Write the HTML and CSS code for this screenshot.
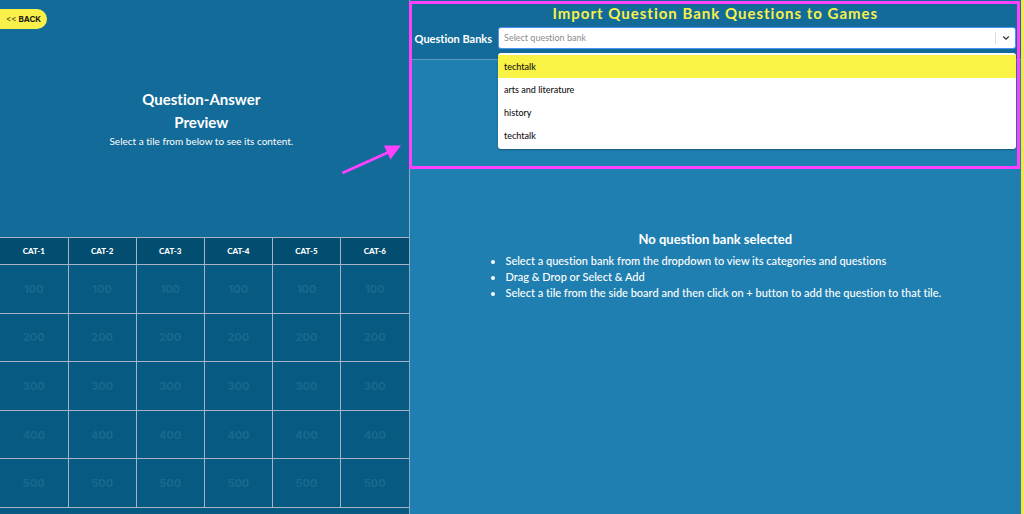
FILE: index.html
```html
<!DOCTYPE html>
<html lang="en">
<head>
<meta charset="utf-8">
<meta name="viewport" content="width=device-width, initial-scale=1">
<title>Import Question Bank Questions to Games</title>
<link rel="stylesheet" href="styles.css">
</head>
<body class="page">
<aside class="side">
  <section class="preview">
    <button class="back" type="button"><span class="back-mark">&lt;&lt;</span> BACK</button>
    <h2 class="preview-title">Question-Answer<br>Preview</h2>
    <p class="preview-text">Select a tile from below to see its content.</p>
  </section>
  <div class="board-wrap">
    <table class="board">
      <thead>
        <tr><th>CAT-1</th><th>CAT-2</th><th>CAT-3</th><th>CAT-4</th><th>CAT-5</th><th>CAT-6</th></tr>
      </thead>
      <tbody>
        <tr><td>100</td><td>100</td><td>100</td><td>100</td><td>100</td><td>100</td></tr>
        <tr><td>200</td><td>200</td><td>200</td><td>200</td><td>200</td><td>200</td></tr>
        <tr><td>300</td><td>300</td><td>300</td><td>300</td><td>300</td><td>300</td></tr>
        <tr><td>400</td><td>400</td><td>400</td><td>400</td><td>400</td><td>400</td></tr>
        <tr><td>500</td><td>500</td><td>500</td><td>500</td><td>500</td><td>500</td></tr>
      </tbody>
    </table>
  </div>
</aside>
<main class="main">
  <header class="header">
    <h1 class="title">Import Question Bank Questions to Games</h1>
    <div class="field">
      <label class="label" for="bank">Question Banks</label>
      <div class="picker">
        <select class="select" id="bank">
          <option value="">Select question bank</option>
          <option>techtalk</option>
          <option>arts and literature</option>
          <option>history</option>
          <option>techtalk</option>
        </select>
        <span class="indicator"><svg width="8" height="6" viewBox="0 0 8 6"><path d="M1.200 1.500 L4 4.200 L6.800 1.500" fill="none" stroke="#333" stroke-width="1.3"/></svg></span>
        <ul class="menu" role="listbox" aria-label="Question Banks">
          <li class="option option-active" role="option" aria-selected="true">techtalk</li>
          <li class="option" role="option" aria-selected="false">arts and literature</li>
          <li class="option" role="option" aria-selected="false">history</li>
          <li class="option" role="option" aria-selected="false">techtalk</li>
        </ul>
      </div>
    </div>
  </header>
  <section class="empty">
    <h2 class="empty-title">No question bank selected</h2>
    <ul class="steps">
      <li>Select a question bank from the dropdown to view its categories and questions</li>
      <li>Drag &amp; Drop or Select &amp; Add</li>
      <li>Select a tile from the side board and then click on + button to add the question to that tile.</li>
    </ul>
  </section>
  <div class="highlight"></div>
  <svg class="arrow" width="62" height="32" viewBox="0 0 62 32"><path d="M2.500 28 L48 7.500" stroke="#ff40ff" stroke-width="3"/><path d="M61 0.500 L44 0.500 L50.500 14.500 Z" fill="#ff40ff"/></svg>
</main>
</body>
</html>
```
FILE: styles.css
```css
* { box-sizing: border-box; }

.page {
  margin: 0;
  min-height: 100vh;
  display: grid;
  grid-template-columns: 40vw 1fr;
  border-right: 3px solid #f3e64c;
  background: #1f7fb1;
  color: #fff;
  font-family: Lato, "Liberation Sans", sans-serif;
  font-variant-ligatures: none;
}

.side {
  display: flex;
  flex-direction: column;
  border-right: 1px solid #8fa9c2;
  background: #126b98;
}

.preview {
  height: 237px;
  padding: 9px 6px 0 0;
}

.back {
  display: block;
  height: 20px;
  padding: 0 6px;
  border: 0;
  border-radius: 0 10px 10px 0;
  background: #f9f04a;
  color: #1b1b1b;
  font: 700 8px/20px Inter, "Liberation Sans", sans-serif;
}

.back-mark { font-weight: 400; }

.preview-title {
  margin: 59px 0 0;
  font-size: 15px;
  font-weight: 700;
  line-height: 23px;
  text-align: center;
}

.preview-text {
  margin: 0;
  font-size: 10px;
  line-height: 15px;
  text-align: center;
}

.board-wrap {
  flex: 1;
  background: #075b82;
}

.board {
  width: 100%;
  height: 271px;
  table-layout: fixed;
  border-collapse: collapse;
  text-align: center;
}

.board th,
.board td {
  padding: 0;
  border: 1px solid #a9b1c5;
}

.board tr > :first-child { border-left: 0; }
.board tr > :last-child { border-right: 0; }

.board th {
  height: 27px;
  background: #034e70;
  font-size: 8px;
  font-weight: 900;
}

.board td {
  color: #1a698f;
  font-family: Inter, "Liberation Sans", sans-serif;
  font-size: 11px;
  font-weight: 700;
}

.main {
  position: relative;
}

.header {
  height: 60px;
  padding: 4px 5px 0;
  border-bottom: 1px solid #5f97b8;
  background: #126b98;
}

.title {
  margin: 0 0 4px;
  color: #f9f04a;
  font-size: 15px;
  font-weight: 700;
  letter-spacing: 1px;
  line-height: 19px;
  text-align: center;
}

.field {
  display: flex;
  align-items: center;
  gap: 6px;
}

.label {
  font-size: 11px;
  font-weight: 700;
  white-space: nowrap;
}

.picker {
  position: relative;
  flex: 1;
}

.select {
  display: block;
  width: 100%;
  height: 22px;
  padding: 0 32px 0 5px;
  border: 1px solid #4d94f0;
  border-radius: 3px;
  background: #fff;
  appearance: none;
  color: #8c8c8c;
  font: 400 9px/20px Lato, "Liberation Sans", sans-serif;
  font-variant-ligatures: none;
}

.indicator {
  position: absolute;
  top: 5px;
  right: 0;
  width: 21px;
  height: 12px;
  display: flex;
  align-items: center;
  justify-content: center;
  border-left: 1px solid #ddd;
  pointer-events: none;
}

.menu {
  position: absolute;
  z-index: 1;
  top: 100%;
  left: 0;
  right: 0;
  margin: 4px 0 0;
  padding: 2px 0;
  border-radius: 3px;
  background: #fff;
  box-shadow: 0 1px 2px rgba(0, 0, 0, .3);
  list-style: none;
}

.option {
  padding: 0 6px;
  color: #111;
  font-size: 9px;
  font-weight: 500;
  line-height: 23px;
}

.option-active { background: #f9f345; }

.empty {
  display: flex;
  flex-direction: column;
  align-items: center;
  padding: 170px 16px 0;
}

.empty-title {
  margin: 0 0 5px;
  font-size: 13px;
  font-weight: 700;
  line-height: 18px;
}

.steps {
  margin: 0;
  padding-left: 16px;
  font-size: 11px;
  font-weight: 500;
  line-height: 16px;
}

.highlight {
  position: absolute;
  top: 1px;
  left: -1px;
  right: 1px;
  height: 168px;
  border: 3px solid #ff40ff;
  pointer-events: none;
}

.arrow {
  position: absolute;
  top: 145px;
  left: -70px;
}
```
